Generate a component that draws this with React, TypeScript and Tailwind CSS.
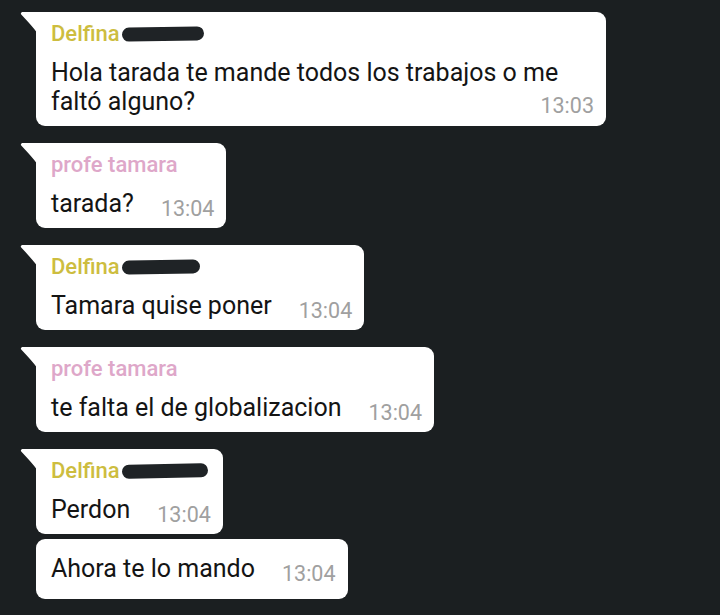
import React from "react";

type Msg = {
  name?: { text: string; color: string; blot?: number };
  text: string;
  time: string;
  tail?: boolean;
  wide?: boolean;
};

const GROUPS: Msg[][] = [
  [
    {
      name: { text: "Delfina", color: "text-[#cdbd3f]", blot: 82 },
      text: "Hola tarada te mande todos los trabajos o me faltó alguno?",
      time: "13:03",
      tail: true,
      wide: true,
    },
  ],
  [
    {
      name: { text: "profe tamara", color: "text-[#dea7c9]" },
      text: "tarada?",
      time: "13:04",
      tail: true,
    },
  ],
  [
    {
      name: { text: "Delfina", color: "text-[#cdbd3f]", blot: 78 },
      text: "Tamara quise poner",
      time: "13:04",
      tail: true,
    },
  ],
  [
    {
      name: { text: "profe tamara", color: "text-[#dea7c9]" },
      text: "te falta el de globalizacion",
      time: "13:04",
      tail: true,
    },
  ],
  [
    {
      name: { text: "Delfina", color: "text-[#cdbd3f]", blot: 86 },
      text: "Perdon",
      time: "13:04",
      tail: true,
    },
    { text: "Ahora te lo mando", time: "13:04" },
  ],
];

function Tail() {
  return (
    <svg
      className="absolute -left-[16px] top-0"
      width="17"
      height="20"
      viewBox="0 0 17 20"
    >
      <path d="M2 0 H17 V20 L16.5 20 Q12 14 1.2 2.6 Q0 1 2 0 Z" fill="#ffffff" />
    </svg>
  );
}

function Bubble({ msg }: { msg: Msg }) {
  return (
    <div
      className={`relative bg-white pl-[15px] pr-[12px] ${
        msg.name ? "pt-[10px] pb-[10px]" : "pt-[15px] pb-[16px]"
      } ${msg.tail ? "rounded-r-[9px] rounded-bl-[9px]" : "rounded-[9px]"} ${
        msg.wide ? "w-[570px]" : ""
      }`}
    >
      {msg.tail && <Tail />}
      {msg.name && (
        <div
          className={`flex items-center text-[22px] leading-[24px] font-medium mb-[12px] ${msg.name.color}`}
        >
          <span>{msg.name.text}</span>
          {msg.name.blot && (
            <span
              className="inline-block h-[14px] rounded-full bg-[#1f2326] ml-[2px] -rotate-1"
              style={{ width: msg.name.blot }}
            />
          )}
        </div>
      )}
      {msg.wide ? (
        // time floats into the last line, like the app does
        <p className="text-[25px] leading-[29px] text-[#141414] flow-root">
          {msg.text}
          <span className="float-right mt-[10px] text-[21.5px] leading-[18px] text-[#a0a0a0]">
            {msg.time}
          </span>
        </p>
      ) : (
        <div className="flex items-end">
          <span className="text-[25px] leading-[29px] text-[#141414] whitespace-nowrap">
            {msg.text}
          </span>
          <span className="ml-[27px] text-[21.5px] leading-[18px] text-[#a0a0a0]">
            {msg.time}
          </span>
        </div>
      )}
    </div>
  );
}

export default function App() {
  return (
    <div
      className="w-[720px] h-[615px] bg-[#1b1f21] pt-[12px] pl-[36px] flex flex-col items-start gap-[17px] overflow-hidden"
      style={{ fontFamily: "Roboto, 'Noto Sans', sans-serif" }}
    >
      {GROUPS.map((group, i) => (
        <div key={i} className="flex flex-col items-start gap-[5px]">
          {group.map((msg, j) => (
            <Bubble key={j} msg={msg} />
          ))}
        </div>
      ))}
    </div>
  );
}
